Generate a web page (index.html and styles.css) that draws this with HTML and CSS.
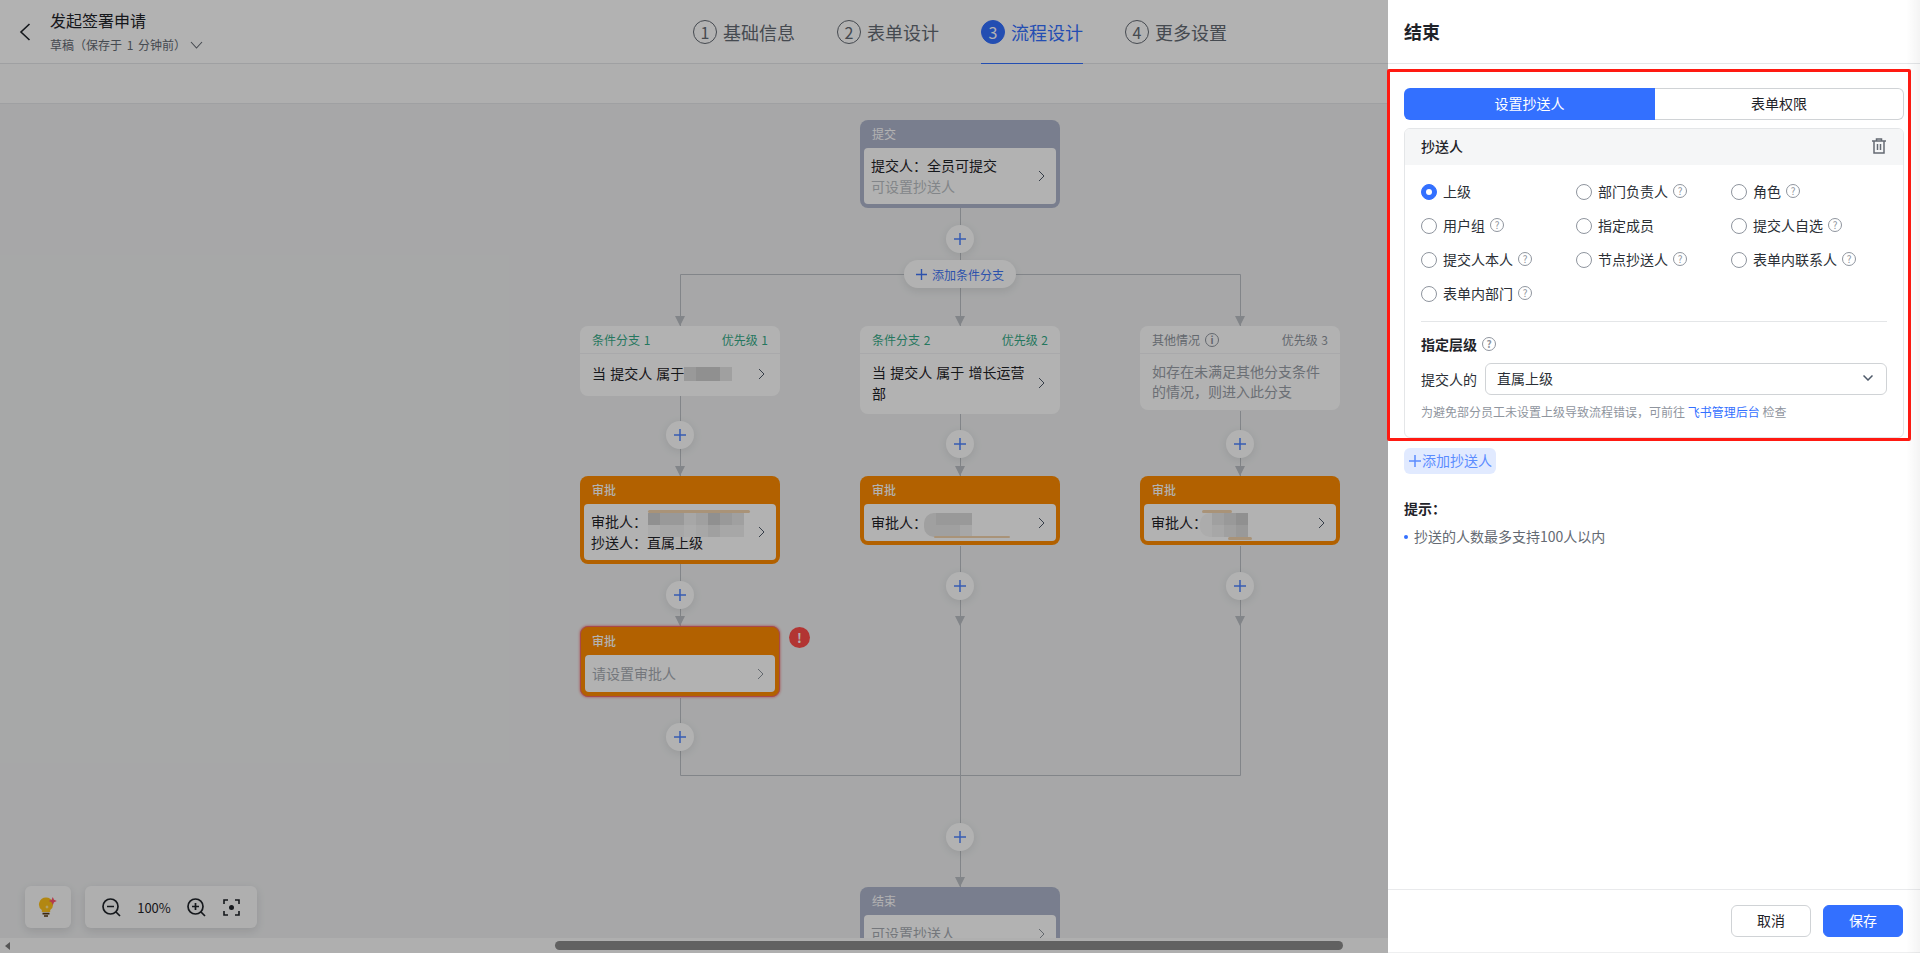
FILE: index.html
```html
<!DOCTYPE html>
<html lang="zh-CN">
<head>
<meta charset="utf-8">
<title>发起签署申请</title>
<link rel="stylesheet" href="styles.css">
</head>
<body>
<svg class="sprite" width="0" height="0" aria-hidden="true">
  <defs>
    <symbol id="chev" viewBox="0 0 7 12"><polyline points="1,1 6,6 1,11" fill="none" stroke="currentColor" stroke-width="1"/></symbol>
    <symbol id="plus" viewBox="0 0 12 12"><path d="M6 0V12M0 6H12" fill="none" stroke="currentColor" stroke-width="1.5"/></symbol>
  </defs>
</svg>
<div class="app">
  <div class="editor">
    <header class="topbar">
      <div class="doc">
        <svg class="back" width="12" height="18" viewBox="0 0 12 18"><polyline points="10.5,1 2,9 10.5,17" fill="none" stroke="#1f2329" stroke-width="1.6"/></svg>
        <div class="doc-text">
          <div class="doc-title">发起签署申请</div>
          <div class="doc-sub">草稿（保存于 1 分钟前）<svg class="doc-caret" width="13" height="8" viewBox="0 0 13 8"><polyline points="1,1 6.5,7 12,1" fill="none" stroke="currentColor" stroke-width="1.1"/></svg></div>
        </div>
      </div>
      <nav class="steps">
        <div class="step"><span class="step-no">1</span>基础信息</div>
        <div class="step"><span class="step-no">2</span>表单设计</div>
        <div class="step step-on"><span class="step-no">3</span>流程设计</div>
        <div class="step"><span class="step-no">4</span>更多设置</div>
      </nav>
      <div></div>
    </header>
    <div class="subbar"></div>
    <main class="canvas">
      <svg class="wires" width="1920" height="834" viewBox="0 104 1920 834">
        <path class="wire" d="M960.5 208V326M960.5 414V476M960.5 546V887M680.5 326V274.5H1240.5V326M680.5 396V476M680.5 564V626M680.5 698V775.5H1240.5M1240.5 411V476M1240.5 546V775.5"/>
        <path class="tip" d="M675 316H685L680 326ZM955 316H965L960 326ZM1235 316H1245L1240 326ZM675 466H685L680 476ZM955 466H965L960 476ZM1235 466H1245L1240 476ZM675 616H685L680 626ZM955 616H965L960 626ZM1235 616H1245L1240 626ZM955 877H965L960 887Z"/>
      </svg>

      <section class="node slate n-submit">
        <div class="node-title">提交</div>
        <div class="node-body">
          <div class="node-text">提交人：全员可提交<br><span class="muted">可设置抄送人</span></div>
          <svg class="chev"><use href="#chev"/></svg>
        </div>
      </section>

      <button class="add a1"><svg class="plus"><use href="#plus"/></svg></button>
      <button class="branch"><svg class="plus"><use href="#plus"/></svg>添加条件分支</button>

      <section class="cond n-c1">
        <div class="cond-head"><span>条件分支 1</span><span>优先级 1</span></div>
        <div class="cond-body"><div>当 提交人 属于<span class="mosaic-inline"><i class="mo-b"></i><i class="mo-a"></i><i class="mo-a"></i><i class="mo-c"></i></span></div><svg class="chev"><use href="#chev"/></svg></div>
      </section>
      <section class="cond n-c2">
        <div class="cond-head"><span>条件分支 2</span><span>优先级 2</span></div>
        <div class="cond-body"><div>当 提交人 属于 增长运营部</div><svg class="chev"><use href="#chev"/></svg></div>
      </section>
      <section class="cond cond-other n-c3">
        <div class="cond-head"><span class="other-name">其他情况<span class="help info">i</span></span><span>优先级 3</span></div>
        <div class="cond-body">如存在未满足其他分支条件的情况，则进入此分支</div>
      </section>

      <button class="add a2"><svg class="plus"><use href="#plus"/></svg></button>
      <button class="add a3"><svg class="plus"><use href="#plus"/></svg></button>
      <button class="add a4"><svg class="plus"><use href="#plus"/></svg></button>

      <section class="node amber n-a1">
        <div class="node-title">审批</div>
        <div class="node-body">
          <div class="node-text">审批人：<br>抄送人：直属上级</div>
          <svg class="chev"><use href="#chev"/></svg>
          <div class="mosaic mosaic-8"><i class="mo-a"></i><i class="mo-b"></i><i class="mo-b"></i><i class="mo-d"></i><i class="mo-c"></i><i class="mo-a"></i><i class="mo-b"></i><i class="mo-c"></i><i class="mo-e"></i><i class="mo-d"></i><i class="mo-d"></i><i class="mo-e"></i><i class="mo-d"></i><i class="mo-c"></i><i class="mo-d"></i><i class="mo-d"></i></div>
          <span class="streak streak-a1"></span>
        </div>
      </section>
      <section class="node amber n-a2">
        <div class="node-title">审批</div>
        <div class="node-body">
          <div class="node-text">审批人：</div>
          <svg class="chev"><use href="#chev"/></svg>
          <div class="mosaic mosaic-4 rounded"><i class="mo-c"></i><i class="mo-b"></i><i class="mo-b"></i><i class="mo-b"></i><i class="mo-c"></i><i class="mo-c"></i><i class="mo-c"></i><i class="mo-d"></i></div>
          <span class="streak streak-a2"></span>
        </div>
      </section>
      <section class="node amber n-a3">
        <div class="node-title">审批</div>
        <div class="node-body">
          <div class="node-text">审批人：</div>
          <svg class="chev"><use href="#chev"/></svg>
          <div class="mosaic mosaic-4 rounded"><i class="mo-e"></i><i class="mo-c"></i><i class="mo-b"></i><i class="mo-a"></i><i class="mo-e"></i><i class="mo-d"></i><i class="mo-c"></i><i class="mo-b"></i></div>
          <span class="streak streak-a3"></span>
          <span class="streak streak-a3b"></span>
        </div>
      </section>

      <button class="add a5"><svg class="plus"><use href="#plus"/></svg></button>
      <button class="add a6"><svg class="plus"><use href="#plus"/></svg></button>
      <button class="add a7"><svg class="plus"><use href="#plus"/></svg></button>

      <section class="node amber node-error n-a4">
        <div class="node-title">审批</div>
        <div class="node-body">
          <div class="node-text placeholder">请设置审批人</div>
          <svg class="chev chev-soft"><use href="#chev"/></svg>
        </div>
      </section>
      <span class="alert">!</span>

      <button class="add a8"><svg class="plus"><use href="#plus"/></svg></button>
      <button class="add a9"><svg class="plus"><use href="#plus"/></svg></button>

      <section class="node slate n-end">
        <div class="node-title">结束</div>
        <div class="node-body">
          <div class="node-text placeholder">可设置抄送人</div>
          <svg class="chev chev-soft"><use href="#chev"/></svg>
        </div>
      </section>

      <div class="tools">
        <div class="tool-card tool-tip">
          <svg width="20" height="22" viewBox="0 0 20 22">
            <path d="M8 1.500a7 7 0 0 1 4.200 12.600V16H3.800v-1.900A7 7 0 0 1 8 1.500Z" fill="#ffc21a"/>
            <path d="M4.500 16.800H11.500V18.500H4.500ZM6 19.200H10V20.800H6Z" fill="#5a3a10"/>
            <path d="M14.800 1l1.200 2.800 2.800 1.200-2.800 1.200-1.200 2.800-1.200-2.800-2.800-1.200 2.800-1.200Z" fill="#ff5470"/>
            <path d="M9 9l.6 1.400 1.400.6-1.400.6-.6 1.400-.6-1.400-1.400-.6 1.400-.6Z" fill="#fff2c4"/>
          </svg>
        </div>
        <div class="tool-card tool-zoom">
          <svg width="19" height="19" viewBox="0 0 19 19"><g fill="none" stroke="#1f2329" stroke-width="1.700"><circle cx="8.500" cy="8.500" r="7.500"/><path d="M14 14l4 4M5 8.500H12"/></g></svg>
          <span class="zoom-val">100%</span>
          <svg width="19" height="19" viewBox="0 0 19 19"><g fill="none" stroke="#1f2329" stroke-width="1.700"><circle cx="8.500" cy="8.500" r="7.500"/><path d="M14 14l4 4M5 8.500H12M8.500 5V12"/></g></svg>
          <svg class="fit" width="17" height="17" viewBox="0 0 17 17"><g fill="none" stroke="#1f2329" stroke-width="1.600"><path d="M1 5V1H5M12 1H16V5M16 12V16H12M5 16H1V12"/></g><circle cx="8.500" cy="8.500" r="2.500" fill="#1f2329"/></svg>
        </div>
      </div>
    </main>
    <div class="hscroll"><span class="hscroll-arrow"></span><span class="hscroll-thumb"></span></div>
    <div class="mask"></div>
  </div>

  <aside class="drawer">
    <div class="drawer-head">结束</div>
    <div class="drawer-body">
      <div class="seg">
        <button class="seg-item seg-on">设置抄送人</button>
        <button class="seg-item">表单权限</button>
      </div>
      <div class="card">
        <div class="card-head">
          <span>抄送人</span>
          <svg width="14" height="16" viewBox="0 0 14 16"><g fill="none" stroke="#646a73" stroke-width="1.500"><path d="M0 3H14M4.500 3V1H9.500V3M2 3V15H12V3M5.500 6V12M8.500 6V12"/></g></svg>
        </div>
        <div class="card-main">
          <div class="radios">
            <label class="radio"><span class="dot dot-on"></span>上级</label>
            <label class="radio"><span class="dot"></span>部门负责人<span class="help">?</span></label>
            <label class="radio"><span class="dot"></span>角色<span class="help">?</span></label>
            <label class="radio"><span class="dot"></span>用户组<span class="help">?</span></label>
            <label class="radio"><span class="dot"></span>指定成员</label>
            <label class="radio"><span class="dot"></span>提交人自选<span class="help">?</span></label>
            <label class="radio"><span class="dot"></span>提交人本人<span class="help">?</span></label>
            <label class="radio"><span class="dot"></span>节点抄送人<span class="help">?</span></label>
            <label class="radio"><span class="dot"></span>表单内联系人<span class="help">?</span></label>
            <label class="radio"><span class="dot"></span>表单内部门<span class="help">?</span></label>
          </div>
          <div class="rule"></div>
          <div class="level-title">指定层级<span class="help">?</span></div>
          <div class="level-row">
            <span>提交人的</span>
            <div class="select"><span>直属上级</span><svg width="10" height="6" viewBox="0 0 10 6"><polyline points="0.500,0.500 5,5 9.500,0.500" fill="none" stroke="#4e5969" stroke-width="1.500"/></svg></div>
          </div>
          <div class="hint">为避免部分员工未设置上级导致流程错误，可前往 <a class="link">飞书管理后台</a> 检查</div>
        </div>
      </div>
      <button class="add-cc"><svg class="plus-cc"><use href="#plus"/></svg>添加抄送人</button>
      <div class="tip-title">提示：</div>
      <ul class="tip-list"><li>抄送的人数最多支持100人以内</li></ul>
    </div>
    <div class="drawer-foot">
      <button class="btn">取消</button>
      <button class="btn btn-primary">保存</button>
    </div>
    <div class="redbox"></div>
    <div class="edge"></div>
  </aside>
</div>
</body>
</html>
```

FILE: styles.css
```css
* { box-sizing: border-box; }
html, body { margin: 0; height: 100%; overflow: hidden; }
body { font-family: "Noto Sans CJK SC", "Liberation Sans", sans-serif; color: #1f2329; background: #fff; }
button { font: inherit; border: 0; padding: 0; background: none; color: inherit; }
.sprite { position: absolute; }

.app { position: relative; height: 100vh; }
.editor { position: relative; height: 100%; display: flex; flex-direction: column; }
.mask { position: absolute; inset: 0; background: rgba(0, 0, 0, .3); z-index: 10; }

/* top bar */
.topbar { height: 64px; flex: none; background: #fff; border-bottom: 1px solid #e4e6e8; display: grid; grid-template-columns: 1fr auto 1fr; align-items: stretch; }
.doc { display: flex; align-items: center; padding-left: 19px; }
.doc-text { margin-left: 19px; margin-top: -2px; }
.doc-title { font-size: 16px; line-height: 24px; }
.doc-sub { font-size: 12px; line-height: 18px; margin-top: 4px; color: #646a73; display: flex; align-items: center; word-spacing: 2px; }
.doc-caret { margin-left: 4px; }
.steps { display: flex; gap: 42px; }
.step { display: flex; align-items: center; gap: 6px; font-size: 18px; color: #646a73; height: 64px; border-bottom: 1px solid transparent; }
.step-no { width: 24px; height: 24px; border: 1px solid #646a73; border-radius: 50%; display: flex; align-items: center; justify-content: center; font-size: 16px; }
.step-on { color: #3370ff; border-bottom-color: #3370ff; }
.step-on .step-no { background: #3370ff; border-color: #3370ff; color: #fff; }
.subbar { height: 40px; flex: none; background: #fbfbfb; border-bottom: 1px solid #e4e6e8; }

/* free canvas */
.canvas { position: relative; flex: 1; background: #eff0f1; overflow: hidden; }
.wires { position: absolute; left: 0; top: 0; }
.wire { fill: none; stroke: #bbbfc4; stroke-width: 1; }
.tip { fill: #bbbfc4; }

.node { position: absolute; width: 200px; border-radius: 8px; padding: 0 4px 4px; font-size: 14px; line-height: 21px; }
.slate { background: #aeb5cc; }
.amber { background: #ff8c00; }
.node-title { height: 28px; padding-left: 8px; color: #fff; font-size: 12px; line-height: 28px; }
.amber .node-title { font-weight: 500; }
.node-body { position: relative; background: #fff; border-radius: 4px; padding: 8px 11px 8px 7px; display: flex; align-items: center; justify-content: space-between; }
.n-submit .node-body, .n-a1 .node-body { padding-top: 7px; padding-bottom: 7px; }
.muted { color: #bbbfc4; }
.placeholder { color: #a6abb2; }
.chev { width: 7px; height: 12px; flex: none; color: #4e5969; }
.chev-soft { color: #8f959e; }
.n-submit { left: 860px; top: 16px; }
.n-a1 { left: 580px; top: 372px; }
.n-a2 { left: 860px; top: 372px; }
.n-a3 { left: 1140px; top: 372px; }
.n-a4 { left: 580px; top: 522px; }
.n-end { left: 860px; top: 783px; }
.node-error { border: 1px solid #f2686b; box-shadow: 0 0 3px #f2686b; }
.node-error .node-title { padding-left: 7px; }

.cond { position: absolute; top: 222px; width: 200px; background: #fff; border-radius: 8px; font-size: 14px; line-height: 21px; word-spacing: 1px; }
.cond-head { height: 28px; padding: 0 12px; display: flex; align-items: center; justify-content: space-between; font-size: 12px; color: #35ab88; border-bottom: 1px solid #f2f3f5; }
.cond-body { padding: 9px 15px 12px 12px; display: flex; align-items: center; justify-content: space-between; }
.cond-body > div { max-width: 160px; }
.n-c1 { left: 580px; }
.n-c2 { left: 860px; }
.n-c2 .cond-body { padding-top: 8px; padding-bottom: 10px; }
.n-c3 { left: 1140px; }
.cond-other .cond-head { color: #8f959e; }
.cond-other .cond-body { display: block; padding: 7px 12px 9px; line-height: 20px; color: #9aa0a8; }
.other-name { display: flex; align-items: center; }
.info { font-weight: 700; margin-left: 5px; }

.mosaic-inline { display: inline-flex; vertical-align: -2px; }
.mosaic-inline i { width: 12px; height: 14px; }
.mosaic { position: absolute; top: 9px; display: grid; grid-auto-rows: 12px; overflow: hidden; }
.mosaic-8 { left: 64px; grid-template-columns: repeat(8, 12px); }
.mosaic-4 { left: 60px; grid-template-columns: repeat(4, 12px); }
.n-a3 .mosaic-4 { left: 56px; }
.rounded { border-radius: 10px 0 0 10px; }
.mo-a { background: #cfcfcf; }
.mo-b { background: #dcdcdc; }
.mo-c { background: #e5e5e5; }
.mo-d { background: #f0f0f0; }
.mo-e { background: #f6f6f6; }
.streak { position: absolute; height: 3px; border-radius: 3px; background: #f3d3ac; }
.streak-a1 { left: 64px; top: 6px; width: 102px; }
.streak-a2 { left: 70px; top: 32px; width: 76px; height: 2px; }
.streak-a3 { left: 58px; top: 6px; width: 30px; }
.streak-a3b { left: 84px; top: 33px; width: 24px; }

.add { position: absolute; width: 28px; height: 28px; border-radius: 50%; background: #fff; box-shadow: 0 2px 10px rgba(31, 35, 41, .1); display: flex; align-items: center; justify-content: center; color: #4f85ff; }
.plus { width: 12px; height: 12px; }
.a1 { left: 946px; top: 121px; }
.a2 { left: 666px; top: 317px; }
.a3 { left: 946px; top: 326px; }
.a4 { left: 1226px; top: 326px; }
.a5 { left: 666px; top: 477px; }
.a6 { left: 946px; top: 468px; }
.a7 { left: 1226px; top: 468px; }
.a8 { left: 666px; top: 619px; }
.a9 { left: 946px; top: 719px; }
.branch { position: absolute; left: 904px; top: 156px; width: 112px; height: 28px; border-radius: 14px; background: #fff; box-shadow: 0 3px 8px rgba(31, 35, 41, .1); display: flex; align-items: center; justify-content: center; gap: 5px; font-size: 12px; color: #3f76f6; }
.branch .plus { width: 11px; height: 11px; }
.alert { position: absolute; left: 789px; top: 523px; width: 21px; height: 21px; border-radius: 50%; background: #ff4d4a; color: #fff; font-size: 13px; font-weight: 700; line-height: 21px; text-align: center; }

.tools { position: absolute; left: 25px; bottom: 10px; display: flex; gap: 14px; }
.tool-card { height: 42px; background: #fbfbfb; border-radius: 6px; box-shadow: 0 3px 10px rgba(31, 35, 41, .12); display: flex; align-items: center; }
.tool-tip { width: 46px; justify-content: center; }
.tool-zoom { width: 172px; padding-left: 17px; }
.zoom-val { width: 66px; text-align: center; font-size: 13px; }
.fit { margin-left: 17px; }

.hscroll { height: 15px; flex: none; background: #fbfbfb; display: flex; align-items: center; }
.hscroll-arrow { margin-left: 5px; border: 4px solid transparent; border-left: 0; border-right: 5px solid #7a7a7a; }
.hscroll-thumb { margin-left: 545px; width: 788px; height: 9px; border-radius: 5px; background: #8b8b8b; }

/* drawer */
.drawer { position: absolute; right: 0; top: 0; bottom: 0; width: 532px; background: #fff; z-index: 20; display: flex; flex-direction: column; }
.drawer-head { height: 64px; flex: none; padding-left: 16px; border-bottom: 1px solid #e4e6e8; font-size: 18px; font-weight: 700; line-height: 63px; }
.drawer-body { flex: 1; padding: 24px 16px 0; font-size: 14px; }
.seg { display: flex; width: 500px; height: 32px; }
.seg-item { flex: 0 0 249px; height: 32px; padding-bottom: 2px; border: 1px solid #d0d3d6; border-left: 0; border-radius: 0 6px 6px 0; text-align: center; }
.seg-on { flex: 0 0 251px; background: #3370ff; border: 0; border-radius: 6px 0 0 6px; color: #fff; }
.card { margin-top: 8px; width: 500px; height: 310px; border: 1px solid #e4e6e8; border-radius: 6px; overflow: hidden; }
.card-head { height: 36px; background: #f5f6f7; padding: 0 17px 2px 16px; display: flex; align-items: center; justify-content: space-between; font-weight: 500; }
.card-main { padding: 10px 16px 0; }
.radios { display: grid; grid-template-columns: repeat(3, 155px); grid-auto-rows: 34px; }
.radio { display: flex; align-items: center; padding-bottom: 2px; color: #2b2f36; }
.dot { position: relative; width: 16px; height: 16px; margin: 2px 6px 0 0; border: 1px solid #8f959e; border-radius: 50%; }
.dot-on { background: #3370ff; border-color: #3370ff; }
.dot-on::after { content: ""; position: absolute; left: 4px; top: 4px; width: 6px; height: 6px; border-radius: 50%; background: #fff; }
.help { width: 14px; height: 14px; margin-left: 5px; flex: none; display: inline-flex; align-items: center; justify-content: center; border: 1px solid #8f959e; border-radius: 50%; color: #8f959e; font-size: 10px; line-height: 1; }
.rule { height: 1px; background: #e4e6e8; margin-top: 10px; }
.level-title { margin-top: 12px; height: 20px; display: flex; align-items: center; font-weight: 700; }
.level-row { margin-top: 9px; display: flex; align-items: center; gap: 8px; color: #2b2f36; }
.select { flex: 1; height: 32px; padding: 0 13px 2px 11px; border: 1px solid #d0d3d6; border-radius: 6px; display: flex; align-items: center; justify-content: space-between; }
.hint { margin-top: 7px; font-size: 12px; line-height: 20px; color: #8f959e; }
.link { color: #3370ff; }
.add-cc { margin-top: 10px; height: 26px; width: 92px; border-radius: 6px; background: #e1eaff; color: #5b8cff; display: flex; align-items: center; padding: 0 0 2px 5px; }
.plus-cc { width: 12px; height: 12px; margin: 2px 1px 0 0; }
.tip-title { margin-top: 23px; line-height: 22px; font-weight: 700; }
.tip-list { list-style: none; margin: 6px 0 0; padding: 0 0 0 10px; color: #646a73; line-height: 22px; position: relative; }
.tip-list li::before { content: ""; position: absolute; left: 0; top: 10px; width: 4px; height: 4px; border-radius: 50%; background: #3370ff; }
.drawer-foot { height: 64px; flex: none; border-top: 1px solid #e9eaec; border-bottom: 1px solid #eeeff0; display: flex; align-items: center; justify-content: flex-end; gap: 12px; padding-right: 17px; }
.btn { width: 80px; height: 32px; padding-bottom: 2px; border: 1px solid #d0d3d6; border-radius: 6px; font-size: 14px; background: #fff; }
.btn-primary { background: #3370ff; border-color: #3370ff; color: #fff; }
.redbox { position: absolute; left: -1px; top: 69px; width: 524px; height: 372px; border: 3px solid #ff1a12; border-radius: 2px; pointer-events: none; }
.edge { position: absolute; right: 0; top: 0; bottom: 0; width: 14px; background: linear-gradient(90deg, rgba(0,0,0,0), rgba(0,0,0,.045)); pointer-events: none; }
```
